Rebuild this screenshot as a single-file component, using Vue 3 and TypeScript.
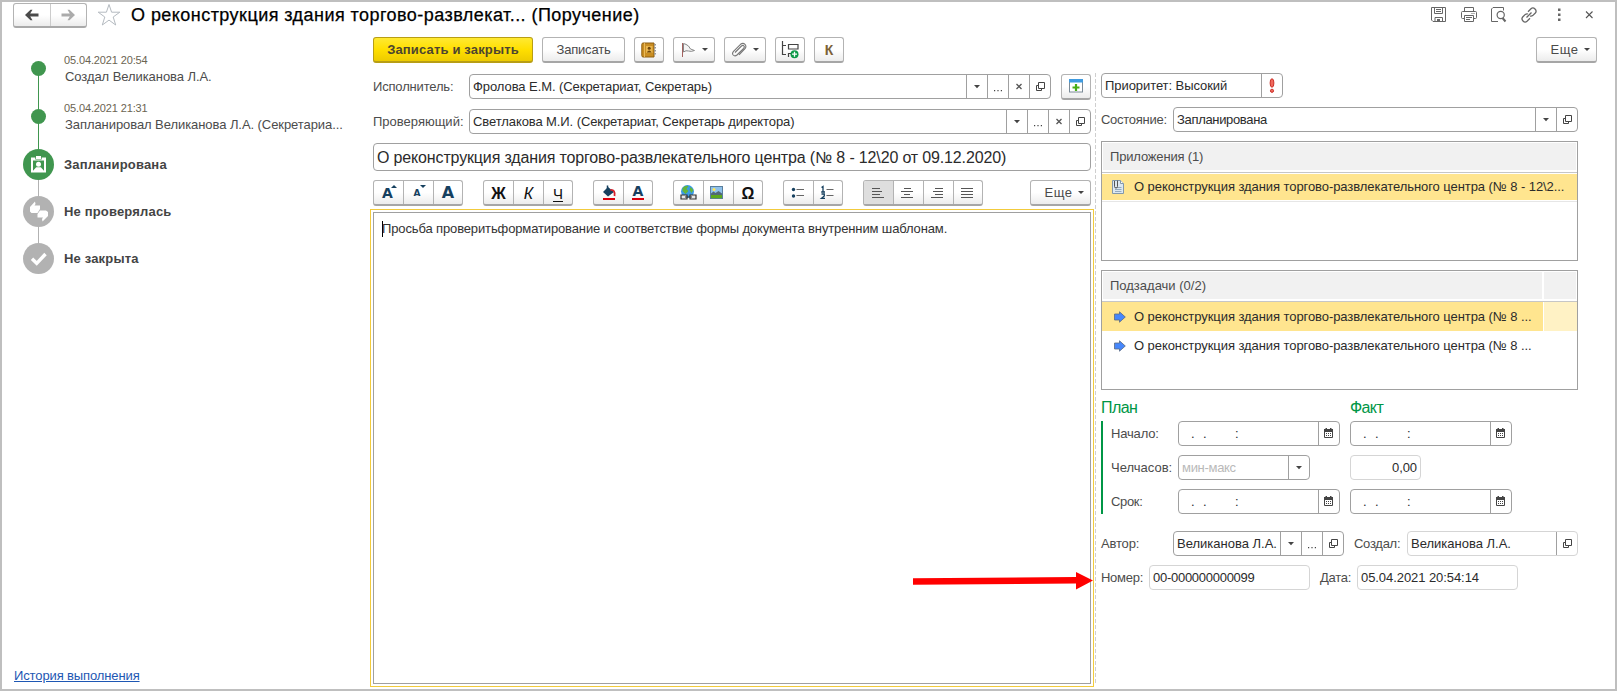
<script setup lang="ts">
type Cell = 'drop' | 'dots' | 'clear' | 'open'

interface Stage { title: string; icon: string; active: boolean }
interface Tool { id: string; glyph?: string; icon?: string; on?: boolean }

const history = [
  { time: '05.04.2021 20:54', text: 'Создал Великанова Л.А.' },
  { time: '05.04.2021 21:31', text: 'Запланировал Великанова Л.А. (Секретариа...' },
]
const stages: Stage[] = [
  { title: 'Запланирована', icon: 'st-plan', active: true },
  { title: 'Не проверялась', icon: 'st-check', active: false },
  { title: 'Не закрыта', icon: 'st-done', active: false },
]
const windowIcons = ['save', 'print', 'preview', 'link', 'more', 'close']
const personCells: Cell[] = ['drop', 'dots', 'clear', 'open']
const authorCells: Cell[] = ['drop', 'dots', 'open']
const formatGroups: Tool[][] = [
  [{ id: 'font-up', glyph: 'А' }, { id: 'font-down', glyph: 'А' }, { id: 'font', glyph: 'А' }],
  [{ id: 'bold', glyph: 'Ж' }, { id: 'italic', glyph: 'К' }, { id: 'under', glyph: 'Ч' }],
  [{ id: 'fill', icon: 'fill' }, { id: 'color', glyph: 'А' }],
  [{ id: 'weblink', icon: 'weblink' }, { id: 'image', icon: 'image' }, { id: 'omega', glyph: 'Ω' }],
  [{ id: 'ul', icon: 'ul' }, { id: 'ol', icon: 'ol' }],
  [
    { id: 'al-left', icon: 'al-left', on: true },
    { id: 'al-center', icon: 'al-center' },
    { id: 'al-right', icon: 'al-right' },
    { id: 'al-just', icon: 'al-just' },
  ],
]
const subtasks = [
  { title: 'О реконструкция здания торгово-развлекательного центра (№ 8 ...', selected: true },
  { title: 'О реконструкция здания торгово-развлекательного центра (№ 8 ...', selected: false },
]
</script>

<template>
  <div class="window">
    <svg class="sprites" width="0" height="0">
      <symbol id="arr-l" viewBox="0 0 16 12"><path d="M1 6 L6.500 .8 H8.500 L6.200 4.600 H14.500 V7.400 H6.200 L8.500 11.200 H6.500 Z" fill="currentColor" /></symbol>
      <symbol id="star" viewBox="0 0 24 24"><path d="M12 1.500 L14.600 9.200 H22.800 L16.200 14 L18.700 22 L12 17.100 L5.300 22 L7.800 14 L1.200 9.200 H9.400 Z" fill="none" stroke="#b4bac0" /></symbol>
      <symbol id="st-plan" viewBox="0 0 31 31"><path fill="#fff" fill-rule="evenodd" d="M8 8.500 H12.300 V10.500 H18.700 V8.500 H23 V23.500 H8 Z M10 11.500 V21.800 L13.200 18.300 H17.800 L21 21.800 V11.500 Z" /><rect x="13" y="7" width="5" height="3" fill="#fff" /><circle cx="15.500" cy="15.200" r="2.500" fill="#fff" /></symbol>
      <symbol id="st-check" viewBox="0 0 31 31"><path fill="#fff" d="M12 5.500 L12.500 8 L11.500 9.500 H17 V13 L14.500 17 H8.500 L7 15.500 V11 Z M19.500 25.500 L19 23 L20 21.500 H14.500 V18 L17 14.500 H23 L25 16 V20 Z" /></symbol>
      <symbol id="st-done" viewBox="0 0 31 31"><path d="M9 15.800 L13.700 20.300 L22.500 11" fill="none" stroke="#fff" stroke-width="3.400" /></symbol>

      <symbol id="save" viewBox="0 0 16 16"><path d="M.5 .5 H14.500 V14.500 H2 L.5 13 Z M3.500 .5 V6.500 H11.500 V.5 M5 2.500 H10 M5 4.500 H10 M4 14.500 V10.500 H11.500 V14.500" fill="none" stroke="#666" /><rect x="6" y="12" width="3" height="3" fill="#666" /></symbol>
      <symbol id="print" viewBox="0 0 16 16"><path d="M3.500 4.500 V.5 H12.500 V4.500 M3.500 11.500 H1.500 Q.5 11.500 .5 10.500 V5.500 Q.5 4.500 1.500 4.500 H14.500 Q15.500 4.500 15.500 5.500 V10.500 Q15.500 11.500 14.500 11.500 H12.500 M3.500 8.500 H12.500 V14.500 H3.500 Z M5 10.500 H11 M5 12.500 H9 M10.500 6.500 H11.500 M12.500 6.500 H13.500" fill="none" stroke="#666" /></symbol>
      <symbol id="preview" viewBox="0 0 16 16"><path d="M7 14.500 H.5 V2 L2 .5 H12.500 V3.500" fill="none" stroke="#666" /><circle cx="9.700" cy="8" r="3.600" fill="none" stroke="#666" stroke-width="1.200" /><path d="M11.500 11 L14.500 14.500" stroke="#666" stroke-width="2" /></symbol>
      <symbol id="link" viewBox="0 0 16 16"><path d="M5.500 10.500 L10.500 5.500 M7 4.700 L10 1.700 Q12 0 14 2 Q16 4 14.300 6 L11.700 8.600 Q10.500 9.500 9 9 M9 11.300 L6 14.300 Q4 16 2 14 Q0 12 1.700 10 L4.300 7.400 Q5.500 6.500 7 7" fill="none" stroke="#666" stroke-width="1.300" /></symbol>
      <symbol id="more" viewBox="0 0 16 16"><path d="M7 1.500 H9.500 V4 H7 Z M7 6.500 H9.500 V9 H7 Z M7 11.500 H9.500 V14 H7 Z" fill="#666" /></symbol>
      <symbol id="close" viewBox="0 0 16 16"><path d="M5 4.500 L11.500 11 M11.500 4.500 L5 11" stroke="#555" stroke-width="1.100" /></symbol>

      <symbol id="drop" viewBox="0 0 20 23"><path d="M7 10 H13 L10 13.300 Z" fill="#444" /></symbol>
      <symbol id="dots" viewBox="0 0 20 23"><path d="M6 15 H7.200 V16.200 H6 Z M9.400 15 H10.600 V16.200 H9.400 Z M12.800 15 H14 V16.200 H12.800 Z" fill="#444" /></symbol>
      <symbol id="clear" viewBox="0 0 20 23"><path d="M7.500 9 L12.500 14 M12.500 9 L7.500 14" stroke="#555" stroke-width="1.300" /></symbol>
      <symbol id="open" viewBox="0 0 20 23"><path d="M8.500 7.500 H14.500 V13.500 H8.500 Z M8 10.500 H6.500 V15.500 H11.500 V14" fill="none" stroke="#444" /></symbol>
      <symbol id="cal" viewBox="0 0 20 23"><path d="M5.500 8.500 H13.500 V15.500 H5.500 Z" fill="#fff" stroke="#444" /><path d="M5 7 H14 V10 H5 Z M6.500 6 H8 V8 H6.500 Z M11 6 H12.500 V8 H11 Z" fill="#444" /><path d="M7 11.500 H12.500 M7 13.500 H12.500" stroke="#444" stroke-dasharray="1 1" /></symbol>
      <symbol id="prio" viewBox="0 0 20 23"><ellipse cx="10" cy="9" rx="1.900" ry="4.300" fill="#f0685c" stroke="#c62820" stroke-width=".9" /><circle cx="10" cy="16.800" r="1.600" fill="#f0685c" stroke="#c62820" stroke-width=".9" /></symbol>

      <symbol id="book" viewBox="0 0 16 16"><path d="M2 1 H13 V15 H2 Q.8 15 .8 13.500 V2.500 Q.8 1 2 1 Z" fill="#c98d22" stroke="#8f5e10" /><path d="M3.500 1 V15" stroke="#e8b95a" /><rect x="5" y="4" width="6.500" height="7" fill="#e9b64f" /><circle cx="8.200" cy="6.300" r="1.500" fill="#6d4409" /><path d="M5.700 10.500 Q8.200 6.500 10.700 10.500 Z" fill="#6d4409" /><path d="M14 2 V14" stroke="#999" stroke-width="2" stroke-dasharray="1.500 1.500" /></symbol>
      <symbol id="flag" viewBox="0 0 16 16"><path d="M2.500 1 V15" stroke="#a3625f" /><path d="M3.500 1.500 Q6 2 8.500 4 L10.500 7 L14.500 8.500 Q11 10 8.500 9 Q6 8 3.500 10 Z" fill="#f4f4f4" stroke="#888" /></symbol>
      <symbol id="clip" viewBox="0 0 16 16"><path d="M4 10.500 L10.500 4 Q12 2.800 13 4 Q13.800 5 12.600 6.300 L6 13 Q3.800 14.800 2.200 13 Q.8 11.300 2.500 9.300 L9.500 2.300 Q12 .5 14 2.300 Q15.800 4.300 14 6.700 L8 12.800" fill="none" stroke="#777" stroke-width="1.100" /></symbol>
      <symbol id="tree" viewBox="0 0 18 18"><path d="M1.500 0 V13.500 H5 M1.500 4.500 H5 M7.500 3.500 H17 V8 H7.500 Z M7.500 16 V12.500 H10" fill="none" stroke="#444" stroke-width="1.200" /><circle cx="13.500" cy="13.200" r="4" fill="#0c9a48" /><path d="M11 13.200 H16 M13.500 10.700 V15.700" stroke="#fff" stroke-width="1.300" /></symbol>
      <symbol id="addwin" viewBox="0 0 16 16"><rect x="1.500" y="1.500" width="13" height="12.500" fill="#fff" stroke="#7b8a96" /><rect x="1" y="1" width="14" height="3.500" fill="#3f9be0" /><path d="M8 6 V13 M4.500 9.500 H11.500" stroke="#46ad15" stroke-width="2.200" /></symbol>

      <symbol id="fill" viewBox="0 0 29 24"><path d="M9 11 L14 6 L20 11 L14 15.500 Z" fill="#16405f" /><path d="M13.500 4.500 V10" stroke="#16405f" stroke-width="1.500" /><path d="M16.500 9 Q21.500 8.500 20.500 15" fill="none" stroke="#d8202a" stroke-width="1.800" /><rect x="9" y="17" width="12" height="2" fill="#d9000d" /></symbol>
      <symbol id="weblink" viewBox="0 0 29 24"><circle cx="13.500" cy="10.500" r="6.500" fill="#3a9be6" /><path d="M8.500 7 Q11.500 4 14.500 5 L12.500 8 L14.500 10 L11.500 13 L8.500 10 Z M16.500 6 L19.500 9 L17.500 12 L15.500 9 Z" fill="#63b53c" /><path d="M7 14 H13 V18 H7 Z M16 14 H22 V18 H16 Z M11 16 H18" fill="#e6e6e6" stroke="#333" stroke-width="1.200" /></symbol>
      <symbol id="image" viewBox="0 0 29 24"><rect x="6.500" y="5.500" width="12" height="12" fill="#8fc1ea" stroke="#5b7f9c" /><path d="M7 12.500 L9.500 10.500 L11.500 12 L14.500 10 L18 12.500 V15 H7 Z" fill="#516878" /><rect x="7" y="14" width="11" height="3.200" fill="#5ba81c" /><circle cx="10" cy="8.500" r="1.500" fill="#ffe85a" /></symbol>
      <symbol id="ul" viewBox="0 0 29 24"><circle cx="9.500" cy="8.500" r="1.700" fill="#16405f" /><circle cx="9.500" cy="15" r="1.700" fill="#16405f" /><path d="M12.500 8.500 H20 M12.500 14.500 H20" stroke="#666" /></symbol>
      <symbol id="ol" viewBox="0 0 29 24"><path d="M7.500 6.500 L9 5.500 V11 M7.200 11 H11 M7.500 13 H10.300 V15 L7.500 17.300 H11" fill="none" stroke="#16405f" stroke-width="1.300" /><path d="M12.500 8.500 H19.500 M12.500 14.500 H19.500" stroke="#666" /></symbol>
      <symbol id="al-left" viewBox="0 0 29 24"><path d="M8 7.500 H16 M8 10.500 H18 M8 13.500 H16 M8 16.500 H20" stroke="#555" /></symbol>
      <symbol id="al-center" viewBox="0 0 29 24"><path d="M10 7.500 H17 M7 10.500 H19 M10 13.500 H16 M7 16.500 H19" stroke="#555" /></symbol>
      <symbol id="al-right" viewBox="0 0 29 24"><path d="M11 7.500 H19 M9 10.500 H19 M11 13.500 H19 M7 16.500 H19" stroke="#555" /></symbol>
      <symbol id="al-just" viewBox="0 0 29 24"><path d="M7 7.500 H19 M7 10.500 H19 M7 13.500 H19 M7 16.500 H19" stroke="#555" /></symbol>
      <symbol id="doc" viewBox="0 0 14 16"><path d="M1.500 1.500 H9.500 L12.500 4.500 V14.500 H1.500 Z" fill="#dce8f2" stroke="#8298ab" /><path d="M9.500 1.500 V4.500 H12.500" fill="#fff" stroke="#8298ab" /><path d="M4 8.500 H10.500 M4 10.500 H10.500 M4 12.500 H10.500" stroke="#93aabf" /><path d="M3.500 2 V7.500 Q3.500 9 5 9 Q6.500 9 6.500 7.500 V1.500" fill="none" stroke="#555" /></symbol>
      <symbol id="arrow" viewBox="0 0 12 12"><path d="M.5 3 H5.500 V.8 L11.300 6 L5.500 11.200 V9 H.5 Z" fill="#4687fb" stroke="#5b6a80" stroke-width=".8" /></symbol>
    </svg>

    <header class="titlebar">
      <div class="nav">
        <button class="nav-btn"><svg width="16" height="12"><use href="#arr-l" /></svg></button>
        <button class="nav-btn off"><svg class="flip" width="16" height="12"><use href="#arr-l" /></svg></button>
      </div>
      <svg class="star" width="24" height="24"><use href="#star" /></svg>
      <h1>О реконструкция здания торгово-развлекат... (Поручение)</h1>
      <div class="win-icons">
        <svg v-for="i in windowIcons" :key="i" width="16" height="16"><use :href="'#' + i" /></svg>
      </div>
    </header>

    <div class="body">
      <aside class="side">
        <div v-for="h in history" :key="h.time" class="event">
          <span class="dot" />
          <div class="event-text">
            <time>{{ h.time }}</time>
            <p>{{ h.text }}</p>
          </div>
        </div>
        <div v-for="s in stages" :key="s.title" class="stage" :class="{ active: s.active }">
          <span class="badge"><svg width="31" height="31"><use :href="'#' + s.icon" /></svg></span>
          <b>{{ s.title }}</b>
        </div>
        <a class="history-link">История выполнения</a>
      </aside>

      <main class="content">
        <div class="commands">
          <button class="btn primary">Записать и закрыть</button>
          <button class="btn save">Записать</button>
          <button class="btn sq"><svg width="16" height="16"><use href="#book" /></svg></button>
          <button class="btn menu"><svg width="16" height="16"><use href="#flag" /></svg><i class="caret" /></button>
          <button class="btn menu"><svg width="16" height="16"><use href="#clip" /></svg><i class="caret" /></button>
          <button class="btn sq"><svg width="18" height="18"><use href="#tree" /></svg></button>
          <button class="btn sq k-btn">К</button>
          <button class="btn more end">Еще<i class="caret" /></button>
        </div>

        <div class="columns">
          <section class="main-col">
            <div class="row executor">
              <label class="t17">Исполнитель:</label>
              <div class="field grow">
                <span class="val">Фролова Е.М. (Секретариат, Секретарь)</span>
                <span v-for="c in personCells" :key="c" class="cell"><svg width="20" height="23"><use :href="'#' + c" /></svg></span>
              </div>
              <button class="btn sq add"><svg width="16" height="16"><use href="#addwin" /></svg></button>
            </div>
            <div class="row reviewer">
              <label>Проверяющий:</label>
              <div class="field grow">
                <span class="val v-rev">Светлакова М.И. (Секретариат, Секретарь директора)</span>
                <span v-for="c in personCells" :key="c" class="cell"><svg width="20" height="23"><use :href="'#' + c" /></svg></span>
              </div>
            </div>
            <div class="field subject"><span class="val">О реконструкция здания торгово-развлекательного центра (№ 8 - 12\20 от 09.12.2020)</span></div>
            <div class="format">
              <div v-for="(g, n) in formatGroups" :key="n" class="group">
                <button v-for="b in g" :key="b.id" :class="{ on: b.on }">
                  <svg v-if="b.icon" width="29" height="24"><use :href="'#' + b.icon" /></svg>
                  <span v-else class="glyph" :class="b.id">{{ b.glyph }}</span>
                </button>
              </div>
              <button class="btn more end">Еще<i class="caret" /></button>
            </div>
            <div class="editor">
              <div class="page"><i class="cursor" /><p>Просьба проверитьформатирование и соответствие формы документа внутренним шаблонам.</p></div>
              <svg class="pointer" width="182" height="20"><path d="M1 7.200 L164 6 V1 L181 9.500 L164 18.500 V12.500 L1 13.700 Z" fill="#f00" /></svg>
            </div>
          </section>

          <section class="side-col">
            <div class="field priority"><span class="val">Приоритет: Высокий</span><span class="cell"><svg width="20" height="23"><use href="#prio" /></svg></span></div>
            <div class="row state">
              <label class="t25">Состояние:</label>
              <div class="field grow">
                <span class="val t33">Запланирована</span>
                <span class="cell"><svg width="20" height="23"><use href="#drop" /></svg></span>
                <span class="cell"><svg width="20" height="23"><use href="#open" /></svg></span>
              </div>
            </div>

            <div class="table files">
              <div class="thead"><span class="th t17">Приложения (1)</span></div>
              <div class="tr sel"><svg width="14" height="16"><use href="#doc" /></svg><span>О реконструкция здания торгово-развлекательного центра (№ 8 - 12\2...</span></div>
            </div>

            <div class="table subs">
              <div class="thead"><span class="th">Подзадачи (0/2)</span><span class="th narrow" /></div>
              <div v-for="(t, n) in subtasks" :key="n" class="tr" :class="{ sel: t.selected }">
                <svg width="12" height="12"><use href="#arrow" /></svg><span>{{ t.title }}</span><em />
              </div>
            </div>

            <div class="heads"><h2>План</h2><h2>Факт</h2></div>
            <div class="plan">
              <label class="t17">Начало:</label>
              <div class="field date"><span class="val"><b>.</b><b>.</b><b>:</b></span><span class="cell"><svg width="20" height="23"><use href="#cal" /></svg></span></div>
              <div class="field date"><span class="val"><b>.</b><b>.</b><b>:</b></span><span class="cell"><svg width="20" height="23"><use href="#cal" /></svg></span></div>
              <label>Челчасов:</label>
              <div class="field hours"><span class="val ph">мин-макс</span><span class="cell"><svg width="20" height="23"><use href="#drop" /></svg></span></div>
              <div class="field ro sum"><span class="val">0,00</span></div>
              <label class="t33">Срок:</label>
              <div class="field date"><span class="val"><b>.</b><b>.</b><b>:</b></span><span class="cell"><svg width="20" height="23"><use href="#cal" /></svg></span></div>
              <div class="field date"><span class="val"><b>.</b><b>.</b><b>:</b></span><span class="cell"><svg width="20" height="23"><use href="#cal" /></svg></span></div>
            </div>

            <div class="row author">
              <label class="lb-author t17">Автор:</label>
              <div class="field who">
                <span class="val name">Великанова Л.А.</span>
                <span v-for="c in authorCells" :key="c" class="cell"><svg width="20" height="23"><use :href="'#' + c" /></svg></span>
              </div>
              <label class="lb-created t25">Создал:</label>
              <div class="field ro who"><span class="val name">Великанова Л.А.</span><span class="cell"><svg width="20" height="23"><use href="#open" /></svg></span></div>
            </div>
            <div class="row number">
              <label class="lb-num t25">Номер:</label>
              <div class="field ro num"><span class="val t25">00-000000000099</span></div>
              <label class="lb-date t25">Дата:</label>
              <div class="field ro num"><span class="val">05.04.2021 20:54:14</span></div>
            </div>
          </section>
        </div>
      </main>
    </div>
  </div>
</template>

<style>
body { background: #fff; }
</style>

<style scoped>
* { box-sizing: border-box; }
.window {
  width: 1617px; height: 691px; border: 2px solid #bfbfbf; background: #fff; overflow: hidden;
  font: 13px/16px "Liberation Sans", Arial, sans-serif; color: #4c4c4c; display: flex; flex-direction: column;
}
.sprites { position: absolute; }
button { font: inherit; color: inherit; padding: 0; margin: 0; border: 0; background: none; }
h1, h2, p { margin: 0; font-weight: 400; }
svg { display: block; flex: none; }
.t17 { letter-spacing: -.17px; }
.t25 { letter-spacing: -.27px; }

.titlebar { height: 35px; flex: none; display: flex; align-items: flex-start; padding: 1px 18px 0 11px; }
.nav { display: flex; width: 74px; height: 25px; border: 1px solid #b3b3b3; border-bottom: 2px solid #a9a9a9; border-radius: 3px; background: linear-gradient(#fff, #fff 50%, #ececec); }
.nav-btn { flex: 1; display: flex; align-items: center; justify-content: center; color: #4a4a4a; }
.nav-btn + .nav-btn { border-left: 1px solid #ccc; }
.nav-btn.off { color: #ababab; }
.flip { transform: scaleX(-1); }
.star { margin: 0 0 0 10px; }
h1 { margin-left: 10px; font-size: 18px; line-height: 25px; letter-spacing: .45px; color: #000; white-space: nowrap; -webkit-text-stroke: .25px #000; }
.win-icons { margin-left: auto; display: flex; gap: 14px; padding-top: 4px; }

.body { flex: 1; display: flex; min-height: 0; }
.side { width: 368px; flex: none; display: flex; flex-direction: column; padding: 15px 0 0 21px; }
.event { display: flex; height: 48px; position: relative; }
.event::before, .stage::after { content: ""; position: absolute; left: 15px; width: 1px; }
.event::before { top: 17px; height: 48px; background: #40964f; }
.dot { width: 15px; height: 15px; border-radius: 50%; background: #40964f; margin: 9px 18px 0 8px; flex: none; z-index: 1; }
time { display: block; font-size: 11px; line-height: 16px; color: #6b6452; letter-spacing: -.13px; }
.event p { line-height: 16px; margin: 1px 0 0 1px; letter-spacing: -.07px; }
.stage { position: relative; display: flex; align-items: center; gap: 10px; height: 47px; color: #444; letter-spacing: .17px; }
.stage.active { margin-top: -7px; }
.stage:not(:nth-child(5))::after { top: 39px; height: 16px; background: #b2b2b2; }
.badge { width: 31px; height: 31px; border-radius: 50%; background: #b2b2b2; z-index: 1; }
.stage.active .badge { background: #40964f; }
.history-link { margin: auto 0 5px -9px; color: #1e57b3; text-decoration: underline; align-self: flex-start; letter-spacing: -.12px; }

.content { flex: 1; display: flex; flex-direction: column; }
.commands { display: flex; gap: 9px; height: 36px; padding: 0 18px 0 3px; flex: none; }
.btn { height: 26px; border: 1px solid #b3b3b3; border-bottom: 2px solid #a6a6a6; border-radius: 3px; background: linear-gradient(#fff, #fff 50%, #ececec); display: flex; align-items: center; justify-content: center; color: #4a4a4a; flex: none; }
.primary { width: 160px; font-weight: 700; letter-spacing: .16px; background: linear-gradient(#ffe932, #ffdf00 50%, #edcb00); border-color: #b89e14; color: #4c4530; }
.save { width: 83px; letter-spacing: -.2px; }
.sq { width: 30px; }
.menu { width: 42px; gap: 6px; }
.k-btn { font-weight: 700; font-size: 14px; color: #7c6136; }
.more { width: 61px; gap: 6px; padding-left: 8px; letter-spacing: .5px; }
.end { margin-left: auto; }
.caret { border: 3px solid transparent; border-top: 3px solid #444; border-bottom: 0; }

.columns { flex: 1; display: flex; min-height: 0; }
.main-col { width: 724px; display: flex; flex-direction: column; padding: 0 3px; }
.row { display: flex; align-items: center; }
.field { height: 25px; border: 1px solid #a0a0a0; border-radius: 4px; display: flex; background: #fff; color: #2b2b2b; overflow: hidden; }
.field.ro { border-color: #d5d5d5; }
.grow { flex: 1; }
.val { flex: 1; padding-left: 3px; line-height: 23px; white-space: nowrap; overflow: hidden; letter-spacing: -.07px; }
.v-rev { letter-spacing: -.09px; }
.val.t25 { letter-spacing: -.27px; }
.val.t33, label.t33 { letter-spacing: -.33px; }
.val.name { letter-spacing: 0; }
.cell { width: 21px; border-left: 1px solid #a0a0a0; flex: none; }
.executor { height: 27px; }
.executor label, .reviewer label { width: 96px; }
.add { margin-left: 10px; }
.reviewer { margin-top: 9px; }
.subject { height: 28px; margin-top: 9px; flex: none; }
.subject .val { font-size: 16px; line-height: 27px; letter-spacing: -.15px; }
.format { display: flex; gap: 20px; margin-top: 9px; flex: none; }
.group { display: flex; height: 26px; border: 1px solid #b3b3b3; border-bottom: 2px solid #a6a6a6; border-radius: 3px; background: linear-gradient(#fff, #fff 50%, #ececec); overflow: hidden; }
.group button { width: 30px; border-left: 1px solid #b3b3b3; height: 23px; text-align: center; }
.group button:first-child { border-left: 0; width: 29px; }
.group button:last-child { width: 29px; }
.group button.on { background: #dedede; }
.glyph { display: block; height: 23px; line-height: 23px; position: relative; font: 700 14px/24px "DejaVu Sans", sans-serif; color: #16405f; }
.font-up::after, .font-down::after { content: ""; position: absolute; top: 4px; border: 3px solid transparent; }
.font-up { padding-right: 2px; }
.font-up::after { right: 6px; border-bottom-color: #16405f; border-top: 0; }
.font-down { font-size: 9px; padding-right: 3px; }
.font-down::after { right: 7px; border-top-color: #16405f; border-bottom: 0; }
.font { font-size: 16px; }
.bold, .italic, .under, .omega { font-family: "Liberation Sans", Arial, sans-serif; font-size: 16px; color: #111; line-height: 25px; }
.italic { font-weight: 400; font-style: italic; }
.under { font-weight: 400; font-size: 15px; text-decoration: underline; text-underline-offset: 2px; }
.color { line-height: 20px; }
.color::after { content: ""; position: absolute; left: 8px; bottom: 4px; width: 12px; height: 2px; background: #d9000d; }
.editor { position: relative; flex: 1; margin: 3px -3px 2px; border: 1px solid #f2cb3c; padding: 2px; }
.page { height: 100%; border: 1px solid #a0a0a0; padding: 8px 8px; display: flex; color: #333; letter-spacing: -.13px; }
.cursor { width: 1px; height: 16px; background: #000; margin-right: -1px; }
.pointer { position: absolute; left: 541px; top: 361px; z-index: 2; }

.side-col { width: 484px; margin-left: 1px; padding: 0 1px 0 6px; background: repeating-linear-gradient(#cfcfcf 0 4px, transparent 4px 6px) 0 0 / 1px 611px no-repeat; }
.priority { width: 182px; }
.state { margin-top: 9px; }
.state label { width: 72px; }
.table { width: 477px; height: 120px; border: 1px solid #a0a0a0; margin-top: 9px; display: flex; flex-direction: column; }
.thead { height: 31px; padding: 1px 1px 2px; border-bottom: 1px solid #c6c6c6; display: flex; gap: 2px; flex: none; }
.th { flex: 1; background: #f1f1f1; padding-left: 7px; line-height: 28px; }
.th.narrow { flex: none; width: 32px; }
.tr { height: 29px; display: flex; align-items: center; color: #2b2b2b; white-space: nowrap; letter-spacing: -.07px; }
.files .tr { padding-left: 9px; gap: 9px; height: 26px; margin-top: 1px; box-shadow: 0 1px #fff, 0 2px #e6e6e6; }
.subs .tr { padding-left: 12px; gap: 8px; }
.tr.sel { background: #ffe58f; }
.tr em { margin-left: auto; width: 34px; height: 100%; }
.tr.sel em { background: #fff2c5; border-left: 1px solid #fff; }
.heads { display: flex; margin: 7px 0 2px; }
.heads h2 { width: 249px; flex: none; font-size: 16px; line-height: 22px; color: #009646; letter-spacing: -.6px; }
.heads h2:last-child { width: auto; }
.plan { border-left: 2px solid #009646; display: grid; grid-template-columns: 57px 162px 162px; column-gap: 10px; row-gap: 9px; align-items: center; padding-left: 8px; height: 93px; }
.plan label { white-space: nowrap; }
.hours { width: 132px; }
.ph { color: #b9b9b9; letter-spacing: -.3px; }
.sum { width: 71px; text-align: right; }
.sum .val { padding-right: 3px; }
.date .val { display: flex; padding-left: 12px; }
.date b { font-weight: 400; width: 12px; }
.date b:nth-child(2) { width: 32px; }
.author { margin-top: 17px; }
.lb-author { width: 72px; }
.who { width: 171px; }
.lb-created { width: 63px; padding-left: 10px; }
.number { margin-top: 9px; }
.lb-num { width: 48px; }
.num { width: 161px; }
.lb-date { width: 47px; padding-left: 10px; }
</style>
